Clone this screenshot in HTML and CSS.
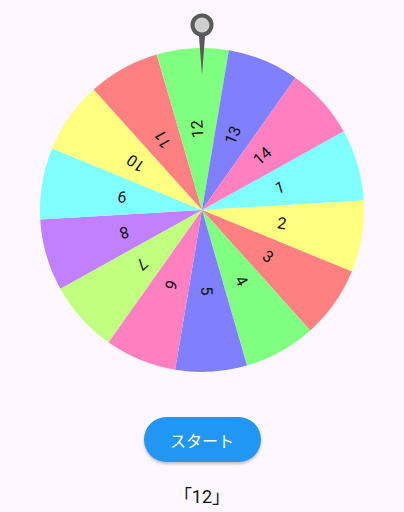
FILE: index.html
```html
<!DOCTYPE html>
<html lang="ja">
<head>
    <meta charset="UTF-8">
    <title>ルーレット</title>
    <link rel="stylesheet" href="styles.css">
</head>
<body>
    <div class="page">
        <svg class="wheel" width="330" height="370" viewBox="-165 -200 330 370">
            <!-- one wedge per number, rotated around the centre -->
            <defs>
                <path id="wedge" d="M0 0 L-36.05 -157.94 A162 162 0 0 1 36.05 -157.94 Z"/>
            </defs>
            <g transform="rotate(73.8)"><use href="#wedge" fill="#80ffff"/><text class="label" transform="rotate(-90)" x="81">1</text></g>
            <g transform="rotate(99.5)"><use href="#wedge" fill="#ffff80"/><text class="label" transform="rotate(-90)" x="81">2</text></g>
            <g transform="rotate(125.2)"><use href="#wedge" fill="#ff8080"/><text class="label" transform="rotate(-90)" x="81">3</text></g>
            <g transform="rotate(150.9)"><use href="#wedge" fill="#80ff80"/><text class="label" transform="rotate(-90)" x="81">4</text></g>
            <g transform="rotate(176.7)"><use href="#wedge" fill="#8080ff"/><text class="label" transform="rotate(-90)" x="81">5</text></g>
            <g transform="rotate(202.4)"><use href="#wedge" fill="#ff80c0"/><text class="label" transform="rotate(-90)" x="81">6</text></g>
            <g transform="rotate(228.1)"><use href="#wedge" fill="#c0ff80"/><text class="label" transform="rotate(-90)" x="81">7</text></g>
            <g transform="rotate(253.8)"><use href="#wedge" fill="#c080ff"/><text class="label" transform="rotate(-90)" x="81">8</text></g>
            <g transform="rotate(279.5)"><use href="#wedge" fill="#80ffff"/><text class="label" transform="rotate(-90)" x="81">9</text></g>
            <g transform="rotate(305.2)"><use href="#wedge" fill="#ffff80"/><text class="label" transform="rotate(-90)" x="81">10</text></g>
            <g transform="rotate(330.9)"><use href="#wedge" fill="#ff8080"/><text class="label" transform="rotate(-90)" x="81">11</text></g>
            <g transform="rotate(356.7)"><use href="#wedge" fill="#80ff80"/><text class="label" transform="rotate(-90)" x="81">12</text></g>
            <g transform="rotate(22.4)"><use href="#wedge" fill="#8080ff"/><text class="label" transform="rotate(-90)" x="81">13</text></g>
            <g transform="rotate(48.1)"><use href="#wedge" fill="#ff80c0"/><text class="label" transform="rotate(-90)" x="81">14</text></g>

            <!-- pointer -->
            <polygon points="-3.5,-180 3.5,-180 0,-135" fill="#5a5a5a"/>
            <circle cx="0" cy="-185" r="11.5" fill="#5a5a5a"/>
            <circle cx="0" cy="-185" r="7.5" fill="#cfcfcf"/>
        </svg>

        <button class="start-btn">スタート</button>
        <div class="result">「12」</div>
    </div>
</body>
</html>
```

FILE: styles.css
```css
body {
    margin: 0;
    background-color: #fef7ff;
    font-family: Roboto, "Noto Sans CJK JP", sans-serif;
}

.page {
    display: flex;
    flex-direction: column;
    align-items: center;
    padding-top: 10px;
}

.wheel {
    display: block;
}

.label {
    font-family: Roboto, sans-serif;
    font-size: 16px;
    fill: #111;
    text-anchor: middle;
    dominant-baseline: central;
}

.start-btn {
    margin-top: 37px;
    width: 117px;
    height: 45px;
    border: none;
    border-radius: 23px;
    background-color: #2196f3;
    color: #ffffff;
    font-family: "Noto Sans CJK JP", sans-serif;
    font-size: 16px;
    font-weight: 400;
    box-shadow: 0 2px 3px rgba(0,0,0,0.25);
}

.result {
    margin-top: 23px;
    font-size: 18px;
    line-height: 24px;
    color: #111;
    font-family: Roboto, "Noto Sans CJK JP", sans-serif;
}
```
